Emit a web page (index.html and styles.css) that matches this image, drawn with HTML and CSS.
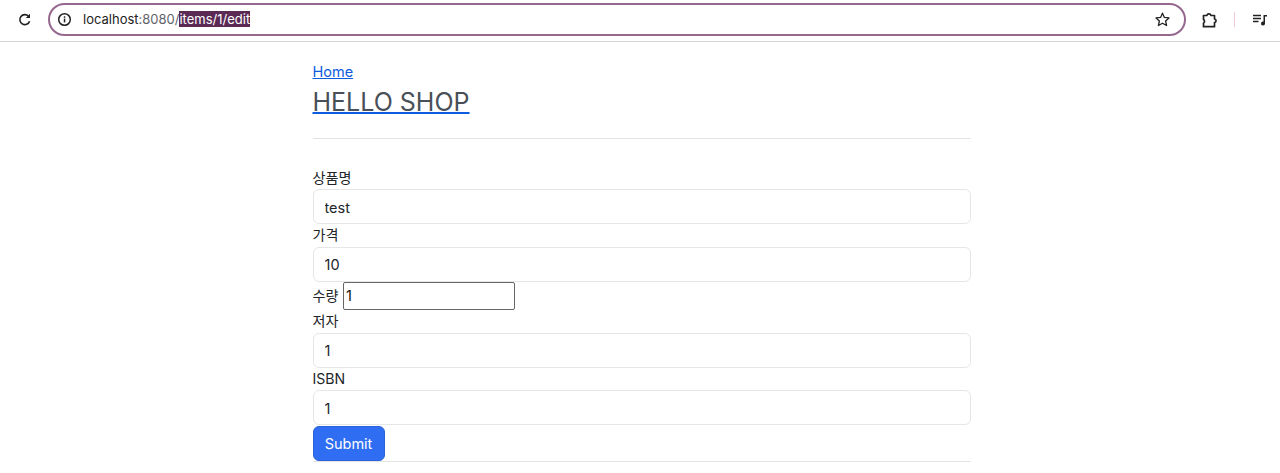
FILE: index.html
```html
<!DOCTYPE html>
<html lang="ko">
<head>
<meta charset="utf-8">
<title>HELLO SHOP</title>
<link rel="stylesheet" href="styles.css">
</head>
<body>
<div class="toolbar">
  <svg class="tb-reload" width="16" height="16" viewBox="0 0 16 16"><path d="M12.6 9.2A5 5 0 1 1 11.6 4.300" fill="none" stroke="#222" stroke-width="1.6"/><path d="M13 1.800V6H8.800z" fill="#222"/></svg>
  <div class="omnibox">
    <svg class="tb-info" width="15" height="15" viewBox="0 0 15 15"><circle cx="7.500" cy="7.500" r="5.800" fill="none" stroke="#222" stroke-width="1.500"/><rect x="6.800" y="6.600" width="1.500" height="3.800" fill="#222"/><rect x="6.800" y="4.300" width="1.500" height="1.500" fill="#222"/></svg>
    <span class="url"><span class="host">localhost</span>:8080/<span class="sel">items/1/edit</span></span>
    <svg class="tb-star" width="17" height="17" viewBox="0 0 17 17"><path d="M8.500 2.200l1.900 4.200 4.600.5-3.400 3.100 1 4.500-4.100-2.300-4.100 2.300 1-4.500L2 6.900l4.600-.5z" fill="none" stroke="#222" stroke-width="1.300" stroke-linejoin="round"/></svg>
  </div>
  <svg class="tb-ext" width="18" height="18" viewBox="0 0 18 18"><path d="M2.500 4.500h3.300a2.200 2.200 0 0 1 4.200 0h3.500v3.300a2 2 0 0 1 0 3.900v4H2.500v-3.500a2.200 2.200 0 0 0 0-3.700z" fill="none" stroke="#222" stroke-width="1.700" stroke-linejoin="round"/></svg>
  <span class="tb-sep"></span>
  <svg class="tb-media" width="16" height="14" viewBox="0 0 16 14"><path d="M1 2.500h8M1 5.500h8M1 8.500h5.500" stroke="#222" stroke-width="1.300"/><path d="M11.500 2h3.500v1.500h-2v7a2 2 0 1 1-1.500-1.900z" fill="#222"/></svg>
</div>
<div class="container">
  <a class="home" href="#">Home</a>
  <h3 class="brand"><a href="#">HELLO SHOP</a></h3>
  <hr class="rule-top">
  <form class="form">
    <label class="label">상품명</label>
    <input class="control" value="test">
    <label class="label">가격</label>
    <input class="control" value="10">
    <div class="plain-row"><label class="inline-label">수량</label><input class="plain" value="1"></div>
    <label class="label">저자</label>
    <input class="control" value="1">
    <label class="label">ISBN</label>
    <input class="control" value="1">
    <button class="submit" type="button">Submit</button>
  </form>
  <hr class="rule-bottom">
</div>
</body>
</html>
```
FILE: styles.css
```css
* { box-sizing: border-box; }
html, body { margin: 0; padding: 0; height: 473px; overflow: hidden; background: #fff; }
body { font-family: Inter, "Noto Sans CJK KR", sans-serif; font-size: 14.500px; line-height: 22.500px; color: #212529; }

.toolbar { height: 42px; border-bottom: 1px solid #d3d3d3; display: flex; align-items: center; padding: 0 0 2px 16.500px; }
.tb-reload { flex: none; }
.omnibox { flex: none; width: 1138px; height: 33px; margin-left: 15.500px; border: 2px solid #96688f; border-radius: 17px; display: flex; align-items: center; padding: 0 13px 0 7px; }
.tb-info { flex: none; }
.url { margin-left: 11px; font-size: 13px; color: #5f6368; white-space: nowrap; }
.host { color: #222; }
.sel { background: #5a2a55; color: #fff; }
.tb-star { margin-left: auto; }
.tb-ext { flex: none; margin-left: 15px; }
.tb-sep { flex: none; width: 1px; height: 15px; background: #f0c8d8; margin-left: 15px; }
.tb-media { flex: none; margin-left: 17px; }

.container { width: 658.500px; margin-left: 312.500px; padding-top: 18.500px; }
.home { display: block; width: fit-content; color: #0d5ce0; text-decoration: underline; }
.brand { margin: 4px 0 0; font-size: 25px; font-weight: 400; line-height: 31px; }
.brand a { color: #495057; text-decoration: underline; text-decoration-color: #0d5ce0; text-decoration-thickness: 2px; text-underline-offset: 1px; }
.rule-top { margin: 19.500px 0 28px; border: 0; border-top: 1px solid #e3e3e3; }
.rule-bottom { margin: 0; border: 0; border-top: 1px solid #e3e3e3; }
.form { display: block; }
.label { display: block; height: 22.500px; font-size: 14.100px; }
.inline-label { font-size: 14.100px; }
.control { display: block; width: 100%; height: 35px; padding: 1px 11px 0; font: inherit; font-size: 14.500px; color: #212529; background: #fff; border: 1px solid #e4e6e8; border-radius: 6px; outline: 0; }
.plain-row { height: 28.500px; display: flex; align-items: center; gap: 4.500px; }
.plain { width: 172px; height: 28px; padding: 0 2px; font: inherit; color: #111; border: 1px solid #666; border-radius: 2px; outline: 0; }
.submit { display: block; width: 72px; height: 35px; margin-top: 1px; padding: 1px 0 0; font: inherit; color: #fff; background: #2f6ef2; border: 1px solid #2a62d8; border-radius: 6px; }
```
